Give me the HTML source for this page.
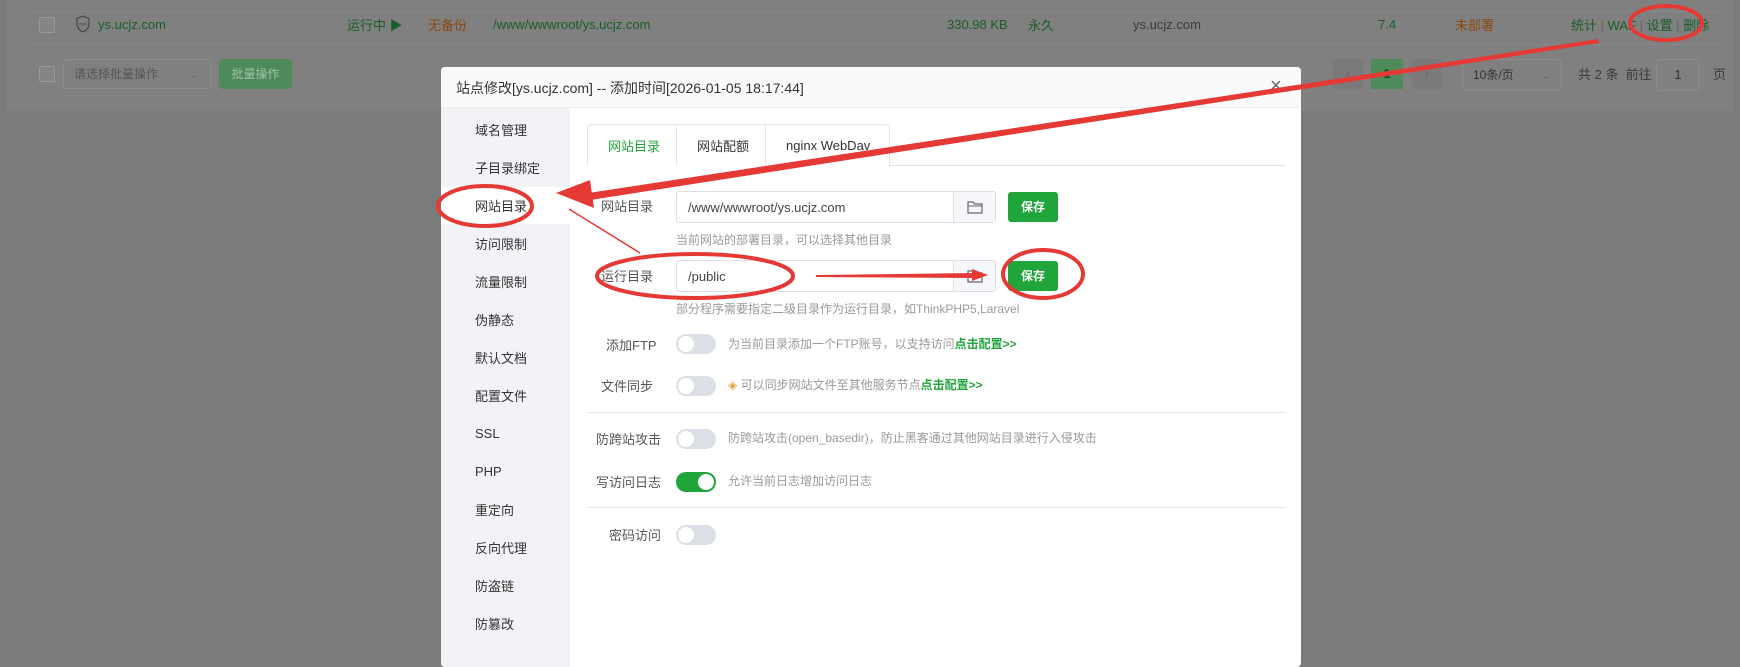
<!DOCTYPE html>
<html><head><meta charset="utf-8"><style>
*{margin:0;padding:0;box-sizing:border-box}
body{width:1740px;height:655px;overflow:hidden;background:#7b7b7b;font-family:"Liberation Sans","Noto Sans CJK SC",sans-serif;font-size:13px;color:#333;position:relative}
.a{position:absolute;white-space:nowrap}
.card{position:absolute;left:6px;top:0;width:1728px;height:111px;background:#808080}
.cb{position:absolute;width:16px;height:16px;border:1px solid #999;border-radius:2px;background:#858585}
.g{color:#1a5e27}.o{color:#8a4a12}.d{color:#3a3a3a}
.modal{position:absolute;left:441px;top:67px;width:860px;height:600px;background:#fff;border-radius:4px;overflow:hidden}
.hd{position:absolute;left:0;top:0;width:860px;height:41px;background:#fafafa;border-bottom:1px solid #eee}
.side{position:absolute;left:0;top:41px;width:129px;height:560px;background:#f2f3f6}
.si{position:absolute;left:34px;font-size:13px;color:#333}
.lab{position:absolute;font-size:13px;color:#555;text-align:right}
.inp{position:absolute;height:32px;border:1px solid #dcdfe6;border-radius:3px;background:#fff}
.fb{position:absolute;right:0;top:0;width:42px;height:30px;border-left:1px solid #dcdfe6;background:#f5f7fa}
.btn{position:absolute;width:50px;height:30px;background:#20a53a;color:#fff;border-radius:3px;font-size:12px;font-weight:bold;text-align:center;line-height:30px}
.help{position:absolute;font-size:12px;color:#999}
.tg{position:absolute;width:40px;height:20px;border-radius:10px;background:#dcdfe6}
.tg::after{content:"";position:absolute;left:2px;top:2px;width:16px;height:16px;border-radius:50%;background:#fff}
.tg.on{background:#20a53a}.tg.on::after{left:22px}
.hr{position:absolute;left:146px;width:699px;height:1px;background:#e4e4e4}
</style></head><body>
<div class="card">
<div style="position:absolute;left:24px;top:11px;width:1690px;height:1px;background:#888"></div>
<div style="position:absolute;left:24px;top:44px;width:1690px;height:1px;background:#888"></div>
</div>
<div class="cb" style="left:39px;top:17px"></div>
<svg class="a" style="left:76px;top:15px" width="14" height="18" viewBox="0 0 14 18"><path d="M7 1 L13 3.5 V9 C13 13 10 15.5 7 17 C4 15.5 1 13 1 9 V3.5 Z" fill="none" stroke="#444" stroke-width="1.2"/><text x="7" y="10.5" font-size="4" text-anchor="middle" fill="#444">WAF</text></svg>
<div class="a g" style="left:98px;top:17px">ys.ucjz.com</div>
<div class="a g" style="left:347px;top:15px">运行中 ▶</div>
<div class="a o" style="left:428px;top:15px">无备份</div>
<div class="a g" style="left:493px;top:17px">/www/wwwroot/ys.ucjz.com</div>
<div class="a g" style="left:947px;top:17px">330.98 KB</div>
<div class="a g" style="left:1028px;top:15px">永久</div>
<div class="a d" style="left:1133px;top:17px">ys.ucjz.com</div>
<div class="a g" style="left:1378px;top:17px">7.4</div>
<div class="a o" style="left:1455px;top:15px">未部署</div>
<div class="a g" style="left:1571px;top:15px">统计 <span style="color:#666">|</span> WAF <span style="color:#666">|</span> 设置 <span style="color:#666">|</span> 删除</div>
<div class="cb" style="left:39px;top:66px"></div>
<div class="a" style="left:63px;top:59px;width:149px;height:30px;border:1px solid #8c8c8c;border-radius:4px;color:#555;font-size:12px;line-height:28px;padding-left:10px">请选择批量操作<span style="position:absolute;right:12px;color:#666">⌄</span></div>
<div class="a" style="left:219px;top:59px;width:73px;height:30px;background:#4f8a5b;border-radius:4px;color:#9cc4a4;font-size:12px;line-height:30px;text-align:center">批量操作</div>
<div class="a" style="left:1333px;top:59px;width:30px;height:30px;background:#7a7a7a;color:#666;text-align:center;line-height:30px">‹</div>
<div class="a" style="left:1371px;top:59px;width:32px;height:30px;background:#4f8a5b;color:#1a4f27;text-align:center;line-height:30px;font-weight:bold">1</div>
<div class="a" style="left:1412px;top:59px;width:30px;height:30px;background:#7a7a7a;color:#666;text-align:center;line-height:30px">›</div>
<div class="a" style="left:1462px;top:59px;width:100px;height:32px;border:1px solid #8c8c8c;border-radius:4px;color:#333;font-size:12px;line-height:30px;padding-left:10px">10条/页<span style="position:absolute;right:10px;color:#666">⌄</span></div>
<div class="a d" style="left:1578px;top:64px">共 2 条 &nbsp;前往</div>
<div class="a" style="left:1656px;top:59px;width:44px;height:32px;border:1px solid #8c8c8c;border-radius:4px;text-align:center;line-height:30px;color:#333">1</div>
<div class="a d" style="left:1713px;top:64px">页</div>

<div class="modal">
<div class="hd"><div class="a" style="left:15px;top:11px;font-size:14px;color:#333">站点修改[ys.ucjz.com] -- 添加时间[2026-01-05 18:17:44]</div>
<div class="a" style="left:829px;top:8px;font-size:20px;color:#666">×</div></div>
<div class="side"></div>
<div class="a" style="left:0;top:120px;width:129px;height:37px;background:#fff"></div>
<div class="si" style="top:53px">域名管理</div>
<div class="si" style="top:91px">子目录绑定</div>
<div class="si" style="top:129px">网站目录</div>
<div class="si" style="top:167px">访问限制</div>
<div class="si" style="top:205px">流量限制</div>
<div class="si" style="top:243px">伪静态</div>
<div class="si" style="top:281px">默认文档</div>
<div class="si" style="top:319px">配置文件</div>
<div class="si" style="top:359px">SSL</div>
<div class="si" style="top:397px">PHP</div>
<div class="si" style="top:433px">重定向</div>
<div class="si" style="top:471px">反向代理</div>
<div class="si" style="top:509px">防盗链</div>
<div class="si" style="top:547px">防篡改</div>
<div class="a" style="left:146px;top:57px;width:303px;height:42px;border:1px solid #e4e4e4;border-bottom:none;border-radius:4px 4px 0 0;background:#fff"></div>
<div class="a" style="left:235px;top:57px;width:1px;height:42px;background:#e4e4e4"></div>
<div class="a" style="left:324px;top:57px;width:1px;height:42px;background:#e4e4e4"></div>
<div class="a" style="left:446px;top:98px;width:399px;height:1px;background:#e4e4e4"></div>
<div class="a" style="left:167px;top:69px;color:#20a53a;font-size:13px">网站目录</div>
<div class="a" style="left:256px;top:69px;font-size:13px">网站配额</div>
<div class="a" style="left:345px;top:71px;font-size:13px">nginx WebDav</div>

<div class="lab" style="left:160px;top:129px">网站目录</div>
<div class="inp" style="left:235px;top:124px;width:320px"><div class="a" style="left:11px;top:8px;color:#444">/www/wwwroot/ys.ucjz.com</div><div class="fb"><svg style="position:absolute;left:13px;top:8px" width="16" height="14" viewBox="0 0 16 14"><path d="M1 2h5l1.5 2H15v9H1z" fill="none" stroke="#666" stroke-width="1.2"/><path d="M1 6h14" stroke="#666" stroke-width="1"/></svg></div></div>
<div class="btn" style="left:567px;top:125px">保存</div>
<div class="help" style="left:235px;top:164px">当前网站的部署目录，可以选择其他目录</div>
<div class="lab" style="left:160px;top:199px">运行目录</div>
<div class="inp" style="left:235px;top:193px;width:320px"><div class="a" style="left:11px;top:8px;color:#444">/public</div><div class="fb"><svg style="position:absolute;left:13px;top:8px" width="16" height="14" viewBox="0 0 16 14"><path d="M1 2h5l1.5 2H15v9H1z" fill="none" stroke="#666" stroke-width="1.2"/><path d="M1 6h14" stroke="#666" stroke-width="1"/></svg></div></div>
<div class="btn" style="left:567px;top:194px">保存</div>
<div class="help" style="left:235px;top:233px">部分程序需要指定二级目录作为运行目录，如ThinkPHP5,Laravel</div>
<div class="lab" style="left:165px;top:268px">添加FTP</div>
<div class="tg" style="left:235px;top:267px"></div>
<div class="help" style="left:287px;top:268px">为当前目录添加一个FTP账号，以支持访问<span style="color:#20a53a;font-weight:bold">点击配置&gt;&gt;</span></div>
<div class="lab" style="left:160px;top:309px">文件同步</div>
<div class="tg" style="left:235px;top:309px"></div>
<div class="help" style="left:287px;top:309px"><span style="color:#e6a23c">◈</span> 可以同步网站文件至其他服务节点<span style="color:#20a53a;font-weight:bold">点击配置&gt;&gt;</span></div>
<div class="hr" style="top:345px"></div>
<div class="lab" style="left:155px;top:362px">防跨站攻击</div>
<div class="tg" style="left:235px;top:362px"></div>
<div class="help" style="left:287px;top:362px">防跨站攻击(open_basedir)，防止黑客通过其他网站目录进行入侵攻击</div>
<div class="lab" style="left:155px;top:405px">写访问日志</div>
<div class="tg on" style="left:235px;top:405px"></div>
<div class="help" style="left:287px;top:405px">允许当前日志增加访问日志</div>
<div class="hr" style="top:440px"></div>
<div class="lab" style="left:168px;top:458px">密码访问</div>
<div class="tg" style="left:235px;top:458px"></div>
</div>

<svg class="a" style="left:0;top:0" width="1740" height="655">
<g fill="none" stroke="#e53935" stroke-width="4">
<ellipse cx="1666" cy="23" rx="36" ry="17"/>
<ellipse cx="485" cy="206" rx="47" ry="20"/>
<ellipse cx="695" cy="276" rx="98" ry="22"/>
<ellipse cx="1043" cy="274" rx="40" ry="24"/>
</g>
<polygon points="1598,39 1599,43 584,201 582,194" fill="#e53935"/>
<polygon points="556,193 590,180 594,208" fill="#e53935"/>
<line x1="569" y1="209" x2="640" y2="253" stroke="#e53935" stroke-width="1.5"/>
<polygon points="816,275 975,273 975,278 816,277" fill="#e53935"/>
<polygon points="988,275 972,269 972,281" fill="#e53935"/>
</svg>
</body></html>
